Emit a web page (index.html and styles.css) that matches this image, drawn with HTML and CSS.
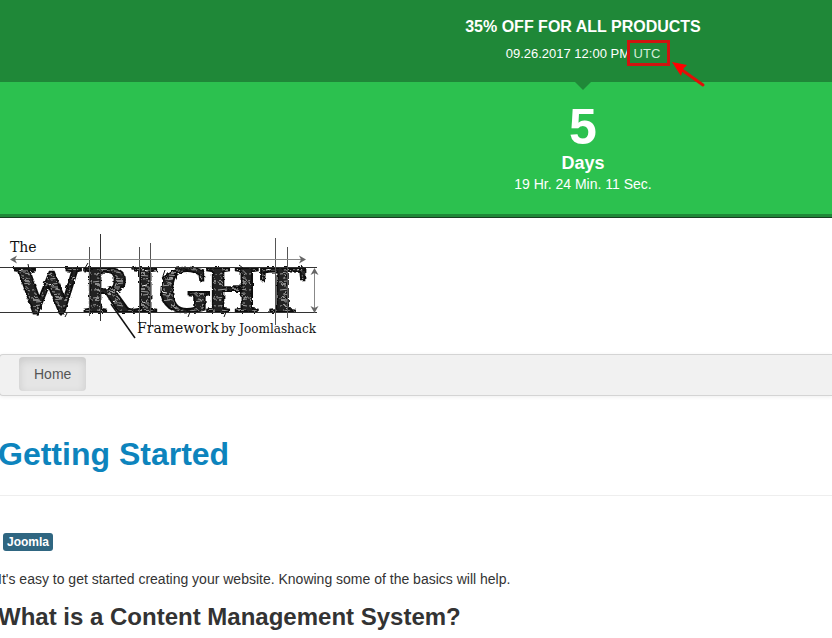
FILE: index.html
```
<!DOCTYPE html>
<html lang="en">
<head>
<meta charset="UTF-8">
<meta name="viewport" content="width=device-width, initial-scale=1.0">
<title>Getting Started</title>
<link rel="stylesheet" href="styles.css">
</head>
<body>

<section class="promo">
  <div class="promo-top">
    <h3 class="promo-title">35% OFF FOR ALL PRODUCTS</h3>
    <p class="promo-date">09.26.2017 12:00 PM <span class="timezone">UTC
      <svg class="arrow" width="36" height="28" viewBox="0 0 36 28" aria-hidden="true">
        <path d="M10 8L31 23" stroke="#e01008" stroke-width="3" stroke-linecap="round"/>
        <path d="M0 0L15 3L11 7L9 14Z" fill="#f00"/>
      </svg></span></p>
  </div>
  <div class="promo-count">
    <div class="count-number">5</div>
    <div class="count-label">Days</div>
    <div class="count-time">19 Hr. 24 Min. 11 Sec.</div>
  </div>
</section>

<header class="header">
  <a class="logo" href="#" aria-label="The Wright Framework by Joomlashack">
    <svg width="320" height="110" viewBox="0 232 320 110">
      <defs>
        <pattern id="hatch" width="31" height="16" patternUnits="userSpaceOnUse">
          <rect width="31" height="16" fill="#222"/>
          <path d="M1 2l9 -1M14 3l10 1M4 6l7 1M19 7l10 -1M0 10l8 -1M12 11l6 1M22 12l8 -1M5 14l11 -1M21 15l7 0M11 8l7 -1M24 1l6 1" stroke="#999" stroke-width="1.2" fill="none"/>
          <path d="M6 4l6 1M24 9l6 0M14 6l4 0M2 12l7 0M18 14l5 -1M16 1l5 0" stroke="#eee" stroke-width="1" fill="none"/>
        </pattern>
        <filter id="rough" x="-5%" y="-10%" width="110%" height="120%">
          <feTurbulence type="fractalNoise" baseFrequency="0.25" numOctaves="2" seed="4"/>
          <feDisplacementMap in="SourceGraphic" scale="4"/>
        </filter>
      </defs>
      <text class="logo-small" x="10" y="252">The</text>
      <text class="logo-name" x="14 83 132 158 206 260" y="312" filter="url(#rough)">WRIGHT</text>
      <g fill="none" stroke="#333">
        <path d="M0 267.500H317M0 312.500H317"/>
        <path d="M89.500 247V316M139.500 247V325M150.500 243V327M275.500 238V325M287.500 247V318" stroke="#555"/>
        <path d="M100.500 234V321"/>
        <path d="M111 304L135 338" stroke="#111" stroke-width="1.500"/>
        <path d="M13 259.500H303M314.500 270V311" stroke="#888"/>
      </g>
      <path d="M10 259.500l7 -4l-2 4l2 4zM306 259.500l-7 -4l2 4l-2 4zM314.500 268l-4 7l4 -2l4 2zM314.500 313l-4 -7l4 2l4 -2z" fill="#666"/>
      <path d="M12 267l3 3M28 264l1 5M71 269l7 -1M85 268l3 -5M65 317l2 -4M37 316l2 -4M131 269l5 -2M163 276l2 -6M188 317l2 -5M224 317l2 -5M239 265l4 3M301 265l3 4" stroke="#111" fill="none"/>
      <text class="logo-small" x="137" y="333">Framework</text>
      <text class="logo-by" x="221" y="333">by Joomlashack</text>
    </svg>
  </a>
</header>

<nav class="navbar">
  <a class="nav-link" href="#">Home</a>
</nav>

<main class="content">
  <h1 class="page-title"><a href="#">Getting Started</a></h1>
  <a class="tag" href="#">Joomla</a>
  <p>It's easy to get started creating your website. Knowing some of the basics will help.</p>
  <h2>What is a Content Management System?</h2>
</main>

</body>
</html>
```
FILE: styles.css
```
body {
  margin: 0;
  background: #fff;
  color: #333;
  font-family: "Liberation Sans", Arial, sans-serif;
  font-size: 14px;
  line-height: 20px;
  overflow: hidden;
}

.promo {
  background: #2cc14f;
  border-bottom: 1px solid #173f22;
  color: #fff;
  text-align: center;
}

.promo-top {
  position: relative;
  padding: 17px 0 18px 334px;
  background: #1f8838;
}

.promo-top::after {
  content: "";
  position: absolute;
  top: 100%;
  left: calc(50% + 159px);
  border: 8px solid transparent;
  border-top-color: #1f8838;
  border-bottom: 0;
}

.promo-title {
  margin: 0 0 7px;
  font-size: 16px;
  line-height: 20px;
}

.promo-date {
  margin: 0;
  font-size: 13px;
  line-height: 20px;
}

.timezone {
  position: relative;
  color: #d5edd9;
}

.timezone::before {
  content: "";
  position: absolute;
  top: -6px;
  right: -10px;
  bottom: -5px;
  left: -7px;
  border: 3px solid #d01410;
}

.arrow {
  position: absolute;
  top: 16px;
  left: 38px;
}

.promo-count {
  padding: 20px 0 20px 334px;
  border-bottom: 3px solid #1f8838;
}

.count-number {
  font-size: 50px;
  line-height: 50px;
  font-weight: bold;
}

.count-label {
  font-size: 18px;
  line-height: 22px;
  font-weight: bold;
}

.count-time {
  line-height: 20px;
}

.header {
  padding: 14px 0 12px;
}

.logo,
.logo svg {
  display: block;
}

.logo-small,
.logo-by {
  font-family: "DejaVu Serif", serif;
  font-size: 14px;
  fill: #111;
}

.logo-by {
  font-size: 12px;
}

.logo-name {
  font-family: "Liberation Serif", "Times New Roman", serif;
  font-size: 68px;
  font-weight: bold;
  fill: url(#hatch);
  stroke: #111;
  stroke-width: 2px;
}

.navbar {
  display: flex;
  padding: 2px 19px 4px;
  margin-left: -1px;
  background: #f1f1f1;
  border: 1px solid #d4d4d4;
  border-right: 0;
  border-radius: 4px 0 0 4px;
  box-shadow: 0 1px 4px rgba(0, 0, 0, 0.07);
}

.nav-link {
  padding: 7px 15px;
  background: #e5e5e5;
  border-radius: 4px;
  box-shadow: inset 0 3px 8px rgba(0, 0, 0, 0.125);
  color: #555;
  text-decoration: none;
}

.content {
  margin-left: -2px;
}

.page-title {
  margin: 38px 0 35px;
  padding-bottom: 21px;
  border-bottom: 1px solid #eee;
  font-size: 32px;
  line-height: 40px;
}

.page-title a {
  color: #0d84bd;
  text-decoration: none;
}

.tag {
  display: inline-block;
  margin-left: 5px;
  padding: 2px 4px;
  background: #2f6681;
  border-radius: 3px;
  color: #fff;
  font-size: 12px;
  line-height: 14px;
  font-weight: bold;
  text-decoration: none;
}

.content p {
  margin: 18px 0 8px;
}

.content h2 {
  margin: 0;
  font-size: 24px;
  line-height: 40px;
}
```
